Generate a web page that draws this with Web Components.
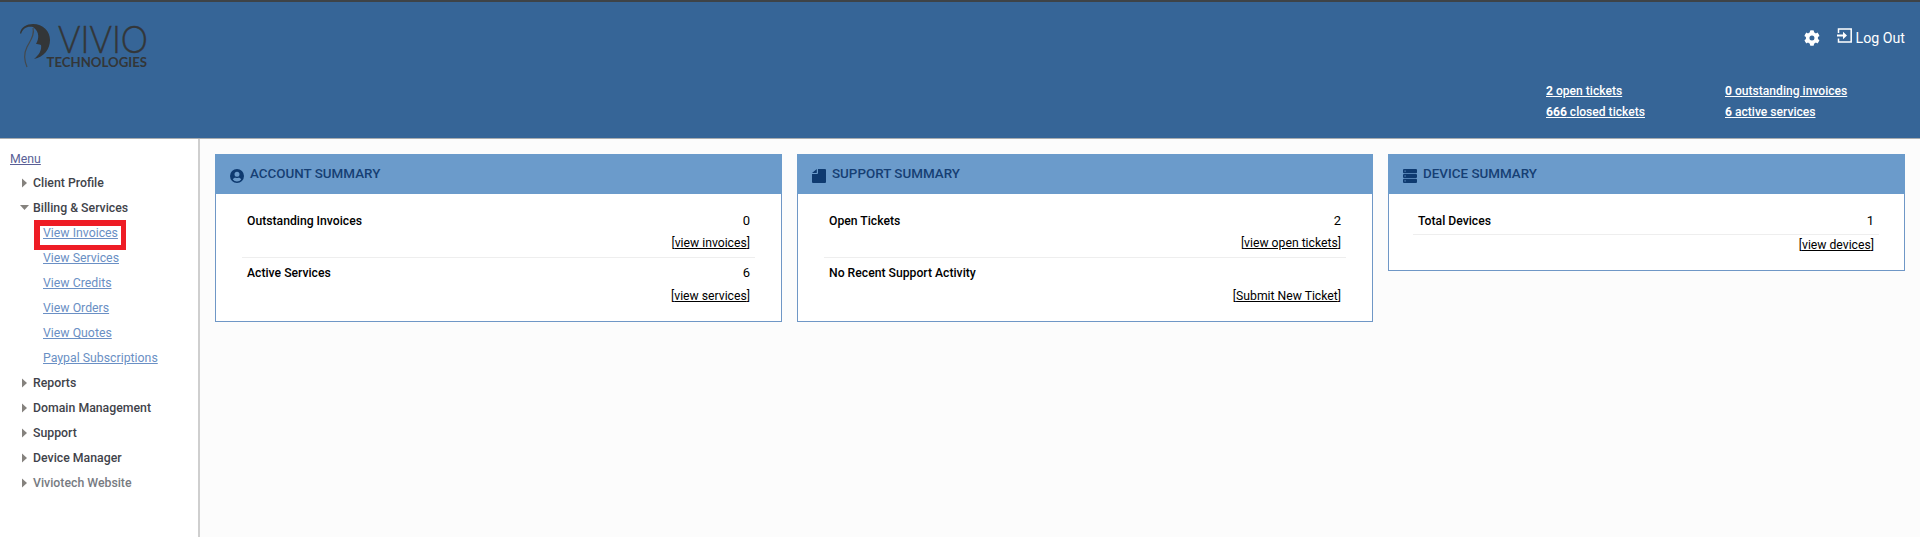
<!DOCTYPE html>
<html lang="en">
<head>
<meta charset="utf-8">
<title>Client Portal</title>
<style>
    html, body { margin: 0; height: 100%; }
    body { font-family: Roboto, "Liberation Sans", sans-serif; font-size: 13px; background-color: #fcfcfc; overflow: hidden; }
</style>
</head>
<body>
<portal-app>
    <portal-header slot="header"></portal-header>
    <side-menu slot="menu"></side-menu>
    <summary-card icon="user" heading="ACCOUNT SUMMARY">
        <summary-row label="Outstanding Invoices" value="0" link="view invoices"></summary-row>
        <summary-row label="Active Services" value="6" link="view services" last></summary-row>
    </summary-card>
    <summary-card icon="file" heading="SUPPORT SUMMARY">
        <summary-row label="Open Tickets" value="2" link="view open tickets"></summary-row>
        <summary-row label="No Recent Support Activity" link="Submit New Ticket" last></summary-row>
    </summary-card>
    <summary-card icon="server" heading="DEVICE SUMMARY" style="--inset: 24px; --inset-end: 25px">
        <summary-row label="Total Devices" value="1" link="view devices" compact></summary-row>
    </summary-card>
</portal-app>

<script>
const appTemplate = document.createElement('template');
appTemplate.innerHTML = `
    <style>
        :host { display: grid; grid-template-rows: 139px 1fr; grid-template-columns: 200px 1fr; height: 100vh; }
        .top { grid-column: 1 / 3; }
        .side { border-right: 2px solid #cfcfcf; box-sizing: border-box; background-color: #fff; }
        .main { display: grid; grid-template-columns: 567px 576px 1fr; gap: 15px; align-items: start; padding: 15px; }
    </style>
    <div class="top"><slot name="header"></slot></div>
    <div class="side"><slot name="menu"></slot></div>
    <div class="main"><slot></slot></div>
`;
class PortalApp extends HTMLElement {
    constructor() {
        super();
        this.attachShadow({ mode: 'open' });
        this.shadowRoot.appendChild(appTemplate.content.cloneNode(true));
    }
}
customElements.define('portal-app', PortalApp);

const headerTemplate = document.createElement('template');
headerTemplate.innerHTML = `
    <style>
        :host { display: block; box-sizing: border-box; height: 139px; background-color: #366597; border-top: 2px solid #3e4347; border-bottom: 1px solid #a9acaf; color: #fff; }
        a { color: #fff; }
        .bar { display: flex; justify-content: space-between; height: 100%; }
        .logo { display: block; margin: 21px 0 0 19px; overflow: visible; }
        .right { display: flex; flex-direction: column; align-items: flex-end; padding: 24px 15px 0 0; }
        .tools { display: flex; align-items: center; gap: 17px; font-size: 14.2px; height: 24px; }
        .tools a { text-decoration: none; display: flex; align-items: center; gap: 4px; }
        .tools .exit { margin-top: -6px; }
        .stats { display: grid; grid-template-columns: 179px 180px; margin-top: 31px; font-size: 12.1px; font-weight: 500; line-height: 21px; }
        .stats b { font-weight: 700; }
    </style>
    <div class="bar">
        <svg class="logo" width="130" height="60" viewBox="0 0 130 60">
            <path d="M1 10C2 4 8 1 14 1C24 1 31 8 31 17C31 26 25 34 15 36C20 32 23 27 22 22C20 21 18 21 17 21C20 16 21 9 14 4C8 3 4 5 2 11Z" fill="#333638"/>
            <path d="M14 5C16 12 11 18 8 24C5 30 5 37 8 44" fill="none" stroke="#44494d" stroke-width="1.2"/>
            <text x="39" y="30" font-family="Lato, 'Noto Sans', sans-serif" font-size="38" font-weight="300" fill="#333638" stroke="#333638" stroke-width=".4" textLength="90" lengthAdjust="spacingAndGlyphs">VIVIO</text>
            <text x="27.5" y="44" font-family="Lato, 'Noto Sans', sans-serif" font-size="12.5" font-weight="700" fill="#333638" textLength="100.5" lengthAdjust="spacingAndGlyphs">TECHNOLOGIES</text>
        </svg>
        <div class="right">
            <div class="tools">
                <svg width="16" height="16" viewBox="0 0 512 512"><path fill="#fff" d="M487 316l-43-25a195 195 0 0 0 0-70l43-25c5-3 7-9 5-14-11-36-30-68-55-95-4-4-10-5-15-2l-43 25c-18-15-39-27-61-35V25c0-6-4-11-9-12a222 222 0 0 0-110 0c-5 1-9 6-9 12v50c-22 8-43 20-61 35L86 85c-5-3-11-2-15 2-25 27-44 59-55 95-2 5 0 11 5 14l43 25a195 195 0 0 0 0 70l-43 25c-5 3-7 9-5 14 11 36 30 68 55 95 4 4 10 5 15 2l43-25c18 15 39 27 61 35v50c0 6 4 11 9 12a222 222 0 0 0 110 0c5-1 9-6 9-12v-50c22-8 43-20 61-35l43 25c5 3 11 2 15-2 25-27 44-59 55-95 2-5 0-11-5-14zM254 336a80 80 0 1 1 0-160 80 80 0 0 1 0 160z"/></svg>
                <a href="#"><svg class="exit" width="15" height="15" viewBox="0 0 15 15"><path fill="none" stroke="#fff" stroke-width="1.5" d="M1.500 5V1h12.700v13H1.500v-3.500"/><path fill="#fff" d="M0 6.500h6V3.800l4 3.700-4 3.700V8.500H0z"/></svg>Log Out</a>
            </div>
            <div class="stats">
                <a href="#"><b>2</b> open tickets</a>
                <a href="#"><b>0</b> outstanding invoices</a>
                <a href="#"><b>666</b> closed tickets</a>
                <a href="#"><b>6</b> active services</a>
            </div>
        </div>
    </div>
`;
class PortalHeader extends HTMLElement {
    constructor() {
        super();
        this.attachShadow({ mode: 'open' });
        this.shadowRoot.appendChild(headerTemplate.content.cloneNode(true));
    }
}
customElements.define('portal-header', PortalHeader);

const menuItems = [
    { label: 'Client Profile' },
    { label: 'Billing & Services', open: true, links: ['View Invoices', 'View Services', 'View Credits', 'View Orders', 'View Quotes', 'Paypal Subscriptions'] },
    { label: 'Reports' },
    { label: 'Domain Management' },
    { label: 'Support' },
    { label: 'Device Manager' },
    { label: 'Viviotech Website', muted: true }
];

const menuTemplate = document.createElement('template');
menuTemplate.innerHTML = `
    <style>
        :host { display: block; padding: 10px 0 0 10px; font-size: 12.3px; }
        .title { display: block; color: #5a5f96; line-height: 20px; margin-bottom: 1px; }
        ul { list-style: none; margin: 0; padding: 0; }
        .item { display: flex; align-items: center; color: #3f434a; font-weight: 500; height: 25px; }
        .item.muted { color: #777b82; }
        .arrow { width: 23px; flex: none; display: flex; padding-left: 12px; box-sizing: border-box; }
        .arrow.open { padding-left: 10px; }
        .sub a { color: #6a8fc4; display: inline-block; line-height: 17px; margin-top: 2px; }
        .sub li { padding-left: 33px; height: 25px; position: relative; display: flex; align-items: center; }
        .mark { position: absolute; left: 24px; top: 0; width: 81px; height: 19px; border: 6px solid #ee1c25; border-width: 6px 5px 5px 6px; }
    </style>
    <a class="title" href="#">Menu</a>
    <ul id="list"></ul>
`;
class SideMenu extends HTMLElement {
    constructor() {
        super();
        this.attachShadow({ mode: 'open' });
        this.shadowRoot.appendChild(menuTemplate.content.cloneNode(true));
        const list = this.shadowRoot.getElementById('list');
        menuItems.forEach(item => {
            const li = document.createElement('li');
            const arrow = item.open
                ? '<span class="arrow open"><svg width="11" height="10" viewBox="0 0 11 10"><path d="M0 2h9L4.500 7z" fill="#85827e"/></svg></span>'
                : '<span class="arrow"><svg width="11" height="10" viewBox="0 0 11 10"><path d="M0 .5l5 4.500-5 4.500z" fill="#85827e"/></svg></span>';
            li.innerHTML = `<div class="item${item.muted ? ' muted' : ''}">${arrow}<span class="text"></span></div>`;
            li.querySelector('.text').textContent = item.label;
            if (item.links) {
                const sub = document.createElement('ul');
                sub.className = 'sub';
                item.links.forEach((text, i) => {
                    const row = document.createElement('li');
                    const link = document.createElement('a');
                    link.href = '#';
                    link.textContent = text;
                    row.appendChild(link);
                    if (i === 0) {
                        const mark = document.createElement('span');
                        mark.className = 'mark';
                        row.appendChild(mark);
                    }
                    sub.appendChild(row);
                });
                li.appendChild(sub);
            }
            list.appendChild(li);
        });
    }
}
customElements.define('side-menu', SideMenu);

const cardIcons = {
    user: '<svg width="14" height="14" viewBox="0 0 14 14"><path fill="#0e3a70" fill-rule="evenodd" d="M7 0a7 7 0 1 0 0 14A7 7 0 0 0 7 0zm0 2.800a2.500 2.500 0 1 1 0 5 2.500 2.500 0 0 1 0-5zm0 9.600a5.400 5.400 0 0 1-4.200-2c.5-1 1.500-1.700 2.700-1.700.5 0 .9.300 1.500.300s1-.300 1.500-.300c1.200 0 2.200.700 2.700 1.700a5.400 5.400 0 0 1-4.200 2z"/></svg>',
    file: '<svg width="14" height="14" viewBox="0 0 14 14"><path fill="#0e3a70" d="M6 0h7a1 1 0 0 1 1 1v12a1 1 0 0 1-1 1H1a1 1 0 0 1-1-1V5h5a1 1 0 0 0 1-1zM0 4l4.800-4v3.400a.6.600 0 0 1-.6.600z"/></svg>',
    server: '<svg width="14" height="14" viewBox="0 0 14 14"><rect width="14" height="4.200" rx="1" fill="#0e3a70"/><rect y="4.900" width="14" height="4.200" rx="1" fill="#0e3a70"/><rect y="9.800" width="14" height="4.200" rx="1" fill="#0e3a70"/><rect x="1.500" y="1.600" width="1.200" height="1" fill="#6b9bcb"/><rect x="1.500" y="6.500" width="1.200" height="1" fill="#6b9bcb"/><rect x="1.500" y="11.400" width="1.200" height="1" fill="#6b9bcb"/></svg>'
};

const cardTemplate = document.createElement('template');
cardTemplate.innerHTML = `
    <style>
        :host { display: block; border: 1px solid #6f97c6; background-color: #fff; }
        .head { display: flex; align-items: center; gap: 6px; height: 39px; background-color: #6b9bcb; margin: -1px -1px 0; padding: 1px 0 0 15px; color: #163f74; font-size: 13.4px; font-weight: 500; }
        .head svg { display: block; margin-top: 2px; }
        .title { margin-top: -2px; }
        .body { padding: 12px var(--inset-end, 26px) 0 var(--inset, 26px); }
    </style>
    <div class="head"><span id="icon"></span><span id="title" class="title"></span></div>
    <div class="body"><slot></slot></div>
`;
class SummaryCard extends HTMLElement {
    constructor() {
        super();
        this.attachShadow({ mode: 'open' });
        this.shadowRoot.appendChild(cardTemplate.content.cloneNode(true));
        this.shadowRoot.getElementById('icon').innerHTML = cardIcons[this.getAttribute('icon')];
        this.shadowRoot.getElementById('title').textContent = this.getAttribute('heading');
    }
}
customElements.define('summary-card', SummaryCard);

const rowTemplate = document.createElement('template');
rowTemplate.innerHTML = `
    <style>
        :host { display: block; font-size: 12.2px; line-height: 17px; color: #000; border-bottom: 1px solid #eeeeee; padding-bottom: 5px; }
        :host([last]) { border-bottom: 0; padding-bottom: 16px; }
        :host([compact]) { border-bottom: 0; padding-bottom: 16px; }
        .line { display: flex; justify-content: space-between; align-items: baseline; height: 17px; padding: 6px 5px 0; }
        .label { font-weight: 500; }
        .value { font-size: 13px; }
        .more { text-align: right; padding: 0 5px; margin-top: 6px; }
        :host([last]) .more { margin-top: 7px; }
        :host([compact]) .line { padding-bottom: 5px; border-bottom: 1px solid #eeeeee; }
        :host([compact]) .more { margin-top: 2px; }
        a { color: #000; }
    </style>
    <div class="line"><span class="label"></span><span class="value"></span></div>
    <div class="more">[<a href="#"></a>]</div>
`;
class SummaryRow extends HTMLElement {
    constructor() {
        super();
        this.attachShadow({ mode: 'open' });
        this.shadowRoot.appendChild(rowTemplate.content.cloneNode(true));
        this.shadowRoot.querySelector('.label').textContent = this.getAttribute('label');
        // keep the baseline the same on rows with no value
        this.shadowRoot.querySelector('.value').textContent = this.getAttribute('value') || '\u00a0';
        this.shadowRoot.querySelector('a').textContent = this.getAttribute('link');
    }
}
customElements.define('summary-row', SummaryRow);
</script>
</body>
</html>
